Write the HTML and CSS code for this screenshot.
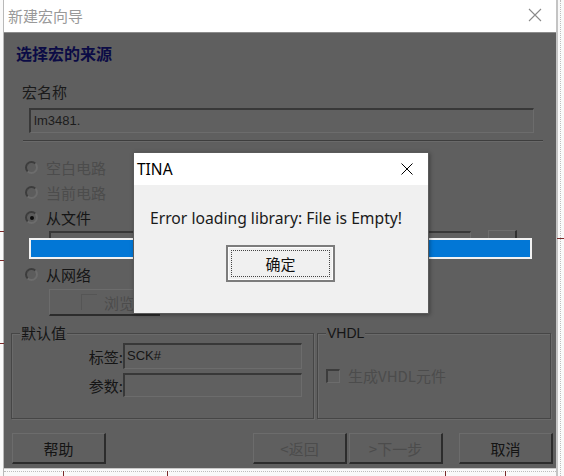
FILE: index.html
```html
<!DOCTYPE html>
<html>
<head>
<meta charset="utf-8">
<link rel="stylesheet" href="styles.css">
</head>
<body>
<div class="desk">
  <div class="strip-left"></div>
  <div class="wizard">
    <div class="titlebar">
      <span class="title">新建宏向导</span>
      <svg class="close" width="14" height="14" viewBox="0 0 14 14"><path d="M1 1L13 13M13 1L1 13" stroke="#8a8a8a" stroke-width="1.1" fill="none"/></svg>
    </div>
    <div class="main">
      <div class="heading">选择宏的来源</div>
      <div class="label-name">宏名称</div>
      <div class="sunken name-field">lm3481.</div>
      <div class="separator"></div>
      <div class="radio-row disabled"><span class="radio"></span>空白电路</div>
      <div class="radio-row disabled"><span class="radio"></span>当前电路</div>
      <div class="radio-row"><span class="radio checked"></span>从文件</div>
      <div class="file-row">
        <div class="sunken file-edit"></div>
        <div class="dots-btn"></div>
        <div class="progress"></div>
      </div>
      <div class="radio-row"><span class="radio"></span>从网络</div>
      <div class="raised browse-btn"><span class="browse-icon"></span><span class="disabled-text">浏览</span></div>
      <div class="groups">
        <div class="group group-default">
          <span class="legend">默认值</span>
          <div class="field-row"><span class="field-label">标签:</span><div class="sunken small-field">SCK#</div></div>
          <div class="field-row"><span class="field-label">参数:</span><div class="sunken small-field"></div></div>
        </div>
        <div class="group group-vhdl">
          <span class="legend">VHDL</span>
          <div class="check-row"><span class="checkbox"></span><span class="disabled-text">生成VHDL元件</span></div>
        </div>
      </div>
      <div class="buttons">
        <div class="raised btn help">帮助</div>
        <div class="spacer"></div>
        <div class="raised btn dis">&lt;返回</div>
        <div class="raised btn dis next">&gt;下一步</div>
        <div class="raised btn cancel">取消</div>
      </div>
    </div>
    <div class="strip-bottom"></div>
  </div>
  <div class="strip-right"></div>

  <span class="mark mark-b1"></span>
  <span class="mark mark-b2"></span>
  <span class="mark mark-b3"></span>
  <span class="mark mark-b4"></span>
  <span class="mark mark-l1"></span>
  <span class="mark mark-l2"></span>
  <span class="mark mark-l3"></span>
  <span class="mark mark-r1"></span>

  <div class="msgbox">
    <div class="msg-title">
      <span>TINA</span>
      <svg class="msg-close" width="12" height="12" viewBox="0 0 12 12"><path d="M0.5 0.5L11.5 11.5M11.5 0.5L0.5 11.5" stroke="#000" stroke-width="1" fill="none"/></svg>
    </div>
    <div class="msg-body">
      <div class="msg-text">Error loading library: File is Empty!</div>
      <div class="ok-btn"><span class="ok-focus">确定</span></div>
    </div>
  </div>
</div>
</body>
</html>
```
FILE: styles.css
```css
* { box-sizing: border-box; }
html, body { margin: 0; padding: 0; }
body {
  width: 564px;
  height: 476px;
  overflow: hidden;
  background: #f7f7f7;
  font-family: "Noto Sans CJK SC", "Noto Sans", sans-serif;
}
.desk {
  position: relative;
  width: 564px;
  height: 476px;
  display: flex;
  background: #f8f8f8;
}
.strip-left {
  width: 4px;
  height: 476px;
  border-right: 1px solid #b9b9b9;
  background: #fafafa;
}
.strip-right {
  width: 8px;
  height: 476px;
  background: #f9f9f9;
  border-left: 2px solid #c4c4c4;
  position: relative;
}
.strip-right::after {
  content: "";
  position: absolute;
  left: 2px;
  top: 0;
  bottom: 0;
  border-left: 1px dotted #bdbdbd;
}
.wizard {
  width: 552px;
  display: flex;
  flex-direction: column;
}
.titlebar {
  height: 33px;
  background: #fff;
  border-bottom: 1px solid #8c8c8c;
  display: flex;
  align-items: center;
  padding-left: 4px;
  padding-right: 14px;
}
.title {
  font-size: 15px;
  color: #999;
  flex: 1;
  margin-top: -2px;
}
.close { margin-top: -2px; }
.main {
  height: 435px;
  background: #5f5f5f;
  position: relative;
  color: #151515;
  font-size: 14px;
  padding-top: 11px;
}
.heading {
  height: 18px;
  line-height: 18px;
  padding-left: 12px;
  font-weight: bold;
  color: #0b0b45;
  font-size: 16px;
}
.label-name {
  margin-top: 21px;
  height: 18px;
  line-height: 18px;
  padding-left: 18px;
  font-size: 15px;
  color: #1a1a1a;
}
.sunken {
  border-style: solid;
  border-width: 2px 1px 1px 2px;
  border-color: #383838 #6c6c6c #6c6c6c #383838;
  background: #606060;
}
.name-field {
  margin-top: 7px;
  margin-left: 25px;
  width: 505px;
  height: 25px;
  font-family: "Liberation Sans", sans-serif;
  font-size: 13px;
  line-height: 21px;
  padding-left: 3px;
  color: #1c1c1c;
}
.separator {
  margin-top: 7px;
  margin-left: 19px;
  width: 520px;
  height: 2px;
  border-top: 1px solid #3e3e3e;
  border-bottom: 1px solid #6a6a6a;
}
.radio-row {
  height: 25px;
  display: flex;
  align-items: center;
  padding-left: 21px;
  font-size: 15px;
  color: #151515;
}
.separator + .radio-row { margin-top: 13px; }
.radio-row.disabled { color: #4c4c4c; }
.radio {
  width: 13px;
  height: 13px;
  border-radius: 50%;
  border: 2px solid;
  border-color: #3c3c3c #6c6c6c #6c6c6c #3c3c3c;
  background: #5c5c5c;
  margin-right: 8px;
  position: relative;
}
.radio.checked::after {
  content: "";
  position: absolute;
  left: 2.5px;
  top: 2.5px;
  width: 4px;
  height: 4px;
  border-radius: 50%;
  background: #0c0c0c;
}
.file-row {
  height: 32px;
  position: relative;
  display: flex;
  align-items: flex-start;
}
.file-edit {
  margin-left: 45px;
  margin-top: 1px;
  width: 422px;
  height: 24px;
}
.dots-btn {
  margin-left: 17px;
  width: 29px;
  height: 24px;
  border-style: solid;
  border-width: 1px 2px 2px 1px;
  border-color: #6e6e6e #303030 #303030 #6e6e6e;
}
.progress {
  position: absolute;
  left: 25px;
  top: 8px;
  width: 503px;
  height: 21px;
  border: 2px solid #f2f2f2;
  background: #0277d6;
}
.raised {
  border-style: solid;
  border-width: 1px 2px 2px 1px;
  border-color: #6c6c6c #2c2c2c #2c2c2c #6c6c6c;
  background: #5f5f5f;
}
.browse-btn {
  margin-top: 2px;
  margin-left: 45px;
  width: 111px;
  height: 27px;
  display: flex;
  align-items: center;
  font-size: 15px;
}
.browse-icon {
  width: 16px;
  height: 16px;
  margin-left: 31px;
  margin-right: 7px;
  border-left: 1px solid #555;
  border-top: 1px solid #555;
}
.disabled-text { color: #4c4c4c; }
.groups {
  margin-top: 17px;
  display: flex;
  padding-left: 7px;
  gap: 3px;
}
.group {
  position: relative;
  height: 86px;
  border: 1px solid #464646;
  box-shadow: inset 1px 1px 0 #6a6a6a, 1px 1px 0 #6a6a6a;
}
.group-default { width: 303px; padding-top: 9px; }
.group-vhdl { width: 234px; }
.legend {
  position: absolute;
  top: -10px;
  left: 8px;
  padding: 0 1px;
  height: 18px;
  line-height: 18px;
  background: #5f5f5f;
  font-size: 15px;
  color: #151515;
}
.group-vhdl .legend {
  font-family: "Liberation Sans", sans-serif;
  font-size: 14px;
  left: 8px;
}
.field-row {
  display: flex;
  align-items: center;
  height: 26px;
  margin-bottom: 4px;
}
.field-row + .field-row { height: 24px; }
.field-label {
  width: 111px;
  text-align: right;
  font-size: 15px;
  color: #151515;
}
.small-field {
  width: 179px;
  height: 100%;
  font-family: "Liberation Sans", sans-serif;
  font-size: 13px;
  line-height: 21px;
  padding-left: 2px;
  color: #151515;
}
.check-row {
  display: flex;
  align-items: center;
  margin-top: 31px;
  padding-left: 8px;
  font-size: 15px;
}
.checkbox {
  width: 14px;
  height: 14px;
  border-style: solid;
  border-width: 2px 1px 1px 2px;
  border-color: #3c3c3c #6c6c6c #6c6c6c #3c3c3c;
  margin-right: 8px;
}
.buttons {
  margin-top: 14px;
  display: flex;
  height: 31px;
  padding-left: 8px;
  padding-right: 3px;
}
.btn {
  width: 94px;
  height: 31px;
  display: flex;
  align-items: center;
  justify-content: center;
  font-size: 15px;
  color: #141414;
}
.btn.dis { color: #4c4c4c; }
.spacer { flex: 1; }
.next { margin-left: 2px; }
.cancel { margin-left: 16px; }
.strip-bottom {
  height: 8px;
  background: #f9f9f9;
  border-top: 1px solid #c8c8c8;
  position: relative;
}
.strip-bottom::after {
  content: "";
  position: absolute;
  left: 0;
  right: 0;
  top: 2px;
  border-top: 1px dotted #bcbcbc;
}
.mark {
  position: absolute;
  background: #7a2a2a;
}
.mark-b1 { left: 63px; top: 471px; width: 1px; height: 5px; }
.mark-b2 { left: 167px; top: 471px; width: 1px; height: 5px; }
.mark-b3 { left: 445px; top: 471px; width: 1px; height: 5px; }
.mark-b4 { left: 505px; top: 471px; width: 1px; height: 5px; }
.mark-l1 { left: 0; top: 231px; width: 4px; height: 1px; }
.mark-l2 { left: 0; top: 260px; width: 4px; height: 1px; }
.mark-l3 { left: 0; top: 343px; width: 4px; height: 1px; }
.mark-r1 { left: 557px; top: 238px; width: 7px; height: 1px; }
.msgbox {
  position: absolute;
  left: 133px;
  top: 152px;
  width: 296px;
  height: 162px;
  border: 1px solid #5a5a5a;
  box-shadow: 1px 1px 4px rgba(0,0,0,0.35);
  background: #f0f0f0;
  display: flex;
  flex-direction: column;
}
.msg-title {
  height: 32px;
  background: #fff;
  display: flex;
  align-items: center;
  padding-left: 3px;
  padding-right: 15px;
  font-family: "Noto Sans", sans-serif;
  font-size: 15.5px;
  color: #000;
  justify-content: space-between;
}
.msg-body {
  flex: 1;
  display: flex;
  flex-direction: column;
  align-items: flex-start;
}
.msg-text {
  margin-top: 22px;
  margin-left: 16px;
  height: 22px;
  line-height: 22px;
  font-family: "Noto Sans", sans-serif;
  font-size: 15.7px;
  color: #1a1a1a;
}
.ok-btn {
  margin-top: 16px;
  margin-left: 92px;
  width: 109px;
  height: 37px;
  border: 2px solid #7c7c7c;
  box-shadow: inset 0 0 0 1px #fcfcfc;
  background: #f0f0f0;
  padding: 3px;
  display: flex;
}
.ok-focus {
  flex: 1;
  border: 1px dotted #444;
  display: flex;
  align-items: center;
  justify-content: center;
  font-size: 15px;
  color: #111;
}
```
